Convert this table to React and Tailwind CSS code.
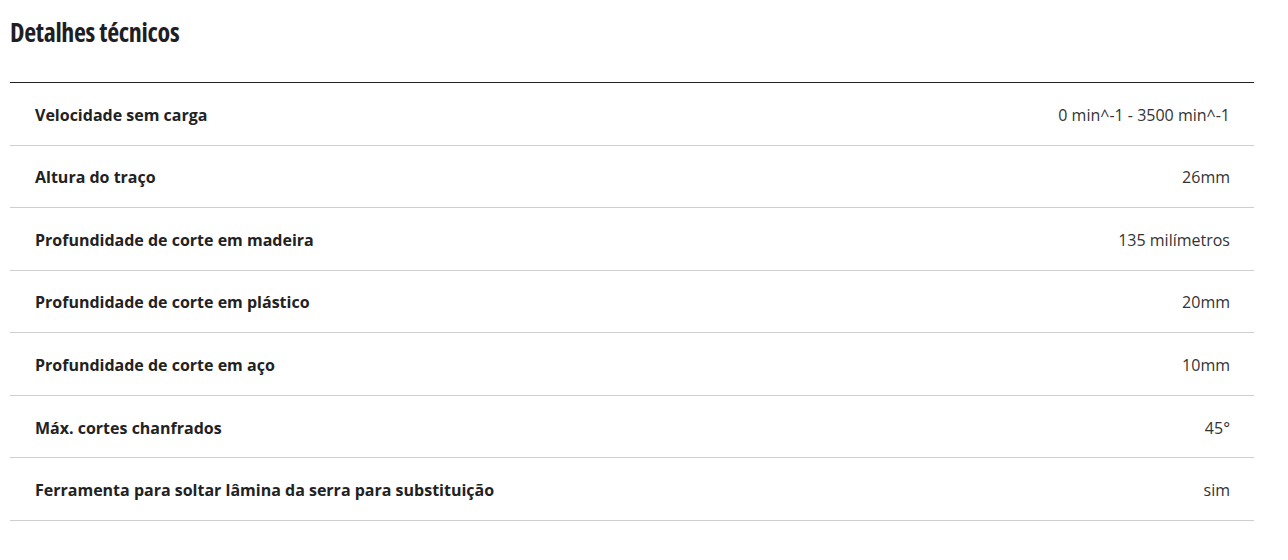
import React from "react";

const specs = [
    ["Velocidade sem carga", "0 min^-1 - 3500 min^-1"],
    ["Altura do traço", "26mm"],
    ["Profundidade de corte em madeira", "135 milímetros"],
    ["Profundidade de corte em plástico", "20mm"],
    ["Profundidade de corte em aço", "10mm"],
    ["Máx. cortes chanfrados", "45°"],
    ["Ferramenta para soltar lâmina da serra para substituição", "sim"],
];

const App = () => {
    return (
        <div className="bg-white min-h-[560px] font-['Open_Sans',sans-serif] text-[#222]">
            <div className="ml-[10px] w-[1244px]">
                {/* Heading */}
                <div className="h-[82px] pt-[16px]">
                    <h2 className="text-[26px] leading-[32px] font-bold font-stretch-condensed tracking-[-0.33px] text-[#1e1e24]">
                        Detalhes técnicos
                    </h2>
                </div>

                {/* Spec table */}
                <div className="border-t border-[#222]">
                    {specs.map(([label, value]) => (
                        <div
                            key={label}
                            className="flex justify-between items-center pl-[25px] pr-[24px] pt-[2px] h-[62.57px] border-b border-[#cfcfcf] text-[16px]"
                        >
                            <span className="font-bold">{label}</span>
                            <span className="font-normal text-[#333]">{value}</span>
                        </div>
                    ))}
                </div>
            </div>
        </div>
    );
};

export default App;
